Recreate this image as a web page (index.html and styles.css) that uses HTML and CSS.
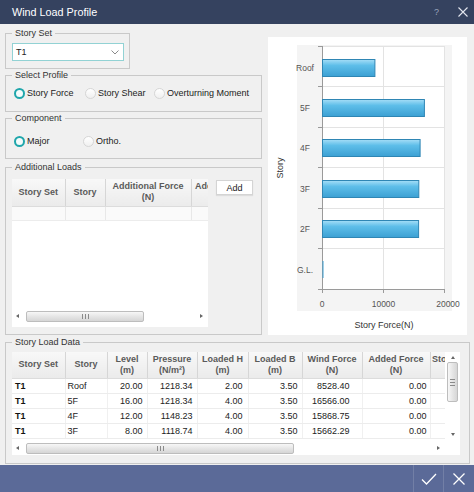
FILE: index.html
```html
<!DOCTYPE html>
<html>
<head>
<meta charset="utf-8">
<link rel="stylesheet" href="styles.css">
</head>
<body>
<div class="window">
  <div class="titlebar">
    <span class="title">Wind Load Profile</span>
    <span class="help">?</span>
    <svg class="tclose" width="10" height="10" viewBox="0 0 10 10"><path d="M0.5 0.5L9.5 9.5M9.5 0.5L0.5 9.5" stroke="#e4e7ef" stroke-width="1.1"/></svg>
  </div>
  <div class="content">
    <div class="top">
      <div class="leftcol">
        <fieldset class="grp g-storyset">
          <legend>Story Set</legend>
          <div class="combo"><span>T1</span><svg width="8" height="5" viewBox="0 0 8 5"><path d="M0.5 0.5L4 4L7.5 0.5" stroke="#8a8a8a" fill="none"/></svg></div>
        </fieldset>
        <fieldset class="grp g-profile">
          <legend>Select Profile</legend>
          <div class="radios">
            <label class="radio w71"><span class="dot on"></span>Story Force</label>
            <label class="radio w69"><span class="dot"></span>Story Shear</label>
            <label class="radio"><span class="dot"></span>Overturning Moment</label>
          </div>
        </fieldset>
        <fieldset class="grp g-component">
          <legend>Component</legend>
          <div class="radios">
            <label class="radio w69"><span class="dot on"></span>Major</label>
            <label class="radio"><span class="dot"></span>Ortho.</label>
          </div>
        </fieldset>
        <fieldset class="grp g-addl">
          <legend>Additional Loads</legend>
          <div class="addl-row">
            <div class="addl-grid">
              <div class="viewport">
                <table class="gt at">
                  <thead>
                    <tr><th class="c-set">Story Set</th><th class="c-story2">Story</th><th class="c-af">Additional Force<br>(N)</th><th class="c-clip">Additional Moment<br>(N-m)</th></tr>
                  </thead>
                  <tbody>
                    <tr class="empty"><td></td><td></td><td></td><td></td></tr>
                  </tbody>
                </table>
              </div>
              <div class="hscroll">
                <span class="arr-l"></span>
                <div class="track"><div class="thumb t-addl"><span class="grip"></span></div></div>
                <span class="arr-r"></span>
              </div>
            </div>
            <button class="btn-add">Add</button>
          </div>
        </fieldset>
      </div>
      <div class="chart">
        <svg width="199" height="298" viewBox="0 0 199 298">
          <defs>
            <linearGradient id="barg" x1="0" y1="0" x2="0" y2="1">
              <stop offset="0" stop-color="#a6def7"/>
              <stop offset="0.35" stop-color="#5ebee9"/>
              <stop offset="1" stop-color="#3ca0d3"/>
            </linearGradient>
          </defs>
          <rect x="29" y="8" width="155" height="266" fill="#f4f4f4"/>
          <rect x="54" y="9" width="123" height="243" fill="#ffffff"/>
          <g stroke="#e3e3e3" stroke-width="1">
            <path d="M54 9.5H177M54 49.5H177M54 90.5H177M54 130.5H177M54 171.5H177M54 211.5H177"/>
            <path d="M115.5 9V252M176.5 9V252"/>
          </g>
          <g stroke="#9a9a9a" stroke-width="1" fill="none">
            <path d="M54.5 9V252.5H177"/>
            <path d="M50 9.5H54M50 49.5H54M50 90.5H54M50 130.5H54M50 171.5H54M50 211.5H54M50 252.5H54"/>
            <path d="M54.5 252V256M115.5 252V256M176.5 252V256"/>
          </g>
          <g fill="url(#barg)" stroke="#2f86b4" stroke-width="1">
            <rect x="54.5" y="22.5" width="52.4" height="17"/>
            <rect x="54.5" y="62.5" width="101.9" height="17"/>
            <rect x="54.5" y="102.5" width="97.6" height="17"/>
            <rect x="54.5" y="143.5" width="96.3" height="17"/>
            <rect x="54.5" y="183.5" width="96.1" height="17"/>
          </g>
          <path d="M55 224V241" stroke="#3ca0d3" stroke-width="1"/>
          <g class="ctext" fill="#555" font-size="8.5" text-anchor="middle">
            <text x="37" y="34">Roof</text>
            <text x="37" y="74">5F</text>
            <text x="37" y="114">4F</text>
            <text x="37" y="155">3F</text>
            <text x="37" y="195">2F</text>
            <text x="37" y="236">G.L.</text>
            <text x="54" y="270">0</text>
            <text x="115.5" y="270">10000</text>
            <text x="180" y="270">20000</text>
          </g>
          <g class="ctext" fill="#333" font-size="9" text-anchor="middle">
            <text x="116" y="291">Story Force(N)</text>
            <text x="0" y="0" transform="translate(15 131) rotate(-90)">Story</text>
          </g>
        </svg>
      </div>
    </div>
    <fieldset class="grp g-data">
      <legend>Story Load Data</legend>
      <div class="data-grid">
        <div class="viewport">
          <table class="gt dt">
            <thead>
              <tr>
                <th class="d-set">Story Set</th><th class="d-story">Story</th><th class="d-level">Level<br>(m)</th><th class="d-pres">Pressure<br>(N/m²)</th><th class="d-lh">Loaded H<br>(m)</th><th class="d-lb">Loaded B<br>(m)</th><th class="d-wf">Wind Force<br>(N)</th><th class="d-af">Added Force<br>(N)</th><th class="d-sf">Story Force<br>(N)</th>
              </tr>
            </thead>
            <tbody>
              <tr><td class="set">T1</td><td class="story">Roof</td><td class="num">20.00</td><td class="num">1218.34</td><td class="num p5">2.00</td><td class="num">3.50</td><td class="num p12">8528.40</td><td class="num p3">0.00</td><td></td></tr>
              <tr><td class="set">T1</td><td class="story">5F</td><td class="num">16.00</td><td class="num">1218.34</td><td class="num p5">4.00</td><td class="num">3.50</td><td class="num p12">16566.00</td><td class="num p3">0.00</td><td></td></tr>
              <tr><td class="set">T1</td><td class="story">4F</td><td class="num">12.00</td><td class="num">1148.23</td><td class="num p5">4.00</td><td class="num">3.50</td><td class="num p12">15868.75</td><td class="num p3">0.00</td><td></td></tr>
              <tr><td class="set">T1</td><td class="story">3F</td><td class="num">8.00</td><td class="num">1118.74</td><td class="num p5">4.00</td><td class="num">3.50</td><td class="num p12">15662.29</td><td class="num p3">0.00</td><td></td></tr>
            </tbody>
          </table>
        </div>
        <div class="vscroll">
          <span class="arr-u"></span>
          <div class="vtrack"><div class="vthumb"><span class="vgrip"></span></div></div>
          <span class="arr-d"></span>
        </div>
        <div class="hscroll">
          <span class="arr-l"></span>
          <div class="track"><div class="thumb t-data"><span class="grip"></span></div></div>
          <span class="arr-r"></span>
        </div>
        <div class="corner"></div>
      </div>
    </fieldset>
  </div>
  <div class="footer">
    <button class="fbtn"><svg width="16" height="12" viewBox="0 0 16 12"><path d="M1 6.5L5.5 11L15 1" stroke="#ffffff" stroke-width="1.3" fill="none"/></svg></button>
    <button class="fbtn"><svg width="12" height="12" viewBox="0 0 12 12"><path d="M0.5 0.5L11.5 11.5M11.5 0.5L0.5 11.5" stroke="#ffffff" stroke-width="1.3"/></svg></button>
  </div>
</div>
</body>
</html>
```

FILE: styles.css
```css
* { box-sizing: border-box; }
html, body { margin: 0; padding: 0; }
body {
  font-family: "Liberation Sans", Arial, sans-serif;
  font-size: 9px;
  color: #222;
  background: #f0f0f0;
}
.window {
  width: 474px;
  height: 492px;
  display: flex;
  flex-direction: column;
  overflow: hidden;
}
.titlebar {
  height: 24px;
  flex: 0 0 24px;
  background: #35425f;
  display: flex;
  align-items: center;
  padding: 0 6px 0 12px;
  color: #fff;
}
.title { flex: 1; font-size: 10.8px; }
.help { color: #9aa4bb; font-size: 9px; margin-right: 19px; }
.tclose { display: block; }

.content {
  flex: 1;
  padding: 3px 4px 0 5px;
  display: flex;
  flex-direction: column;
}
.top { display: flex; gap: 6px; margin-right: 3px; }
.leftcol { width: 257px; display: flex; flex-direction: column; }

fieldset.grp {
  margin: 0;
  border: 1px solid #c9c9c9;
  padding: 0 6px;
  min-width: 0;
}
fieldset.grp legend {
  font-size: 9px;
  line-height: 12px;
  padding: 0 3px;
  color: #333;
}
fieldset.g-storyset { width: 125px; height: 42px; padding-top: 4px; }
fieldset.g-profile { height: 43px; padding-top: 6px; }
fieldset.g-component { height: 47px; padding-top: 11px; }
fieldset.g-addl { height: 174px; margin-top: 2px; padding-top: 6px; }
fieldset.g-data { height: 128px; margin-top: 1px; padding-top: 4px; }

.combo {
  width: 112px;
  height: 18px;
  border: 1px solid #92d2d4;
  background: #fff;
  display: flex;
  align-items: center;
  justify-content: space-between;
  padding: 0 4px 0 3px;
  color: #222;
}

.radios { display: flex; align-items: center; height: 12px; padding-left: 2px; }
.radio { display: flex; align-items: center; gap: 2px; color: #222; white-space: nowrap; }
.w71 { width: 71px; }
.w69 { width: 69px; }
.dot {
  width: 11px;
  height: 11px;
  border-radius: 50%;
  border: 1px solid #d6d6d6;
  background: linear-gradient(#ffffff, #f0f0f0);
}
.dot.on {
  border: 2.5px solid #1fa6ab;
  background: #f4fbfb;
}

.addl-row { display: flex; gap: 8px; align-items: flex-start; }
.addl-grid {
  width: 196px;
  height: 148px;
  flex: 0 0 196px;
  background: #fff;
  display: flex;
  flex-direction: column;
  padding-bottom: 4px;
}
.addl-grid .viewport { flex: 1; overflow: hidden; }
.btn-add {
  margin-top: 1px;
  width: 37px;
  height: 15px;
  padding: 0;
  border: 1px solid #d4d4d4;
  background: #fff;
  font-family: inherit;
  font-size: 9px;
  color: #222;
  box-shadow: 0 1px 1px rgba(0,0,0,0.08);
}

.gt {
  border-collapse: collapse;
  table-layout: fixed;
}
.at { width: 268px; }
.gt th {
  height: 27px;
  padding: 0;
  font-weight: bold;
  color: #5a5a5a;
  line-height: 11px;
  text-align: center;
  background: linear-gradient(#f8f8f8, #ebebeb);
  border-right: 1px solid #d6d6d6;
  border-bottom: 1px solid #dcdcdc;
  white-space: nowrap;
  overflow: hidden;
}
.gt td {
  height: 15px;
  padding: 0;
  border-right: 1px solid #f0f0f0;
  border-bottom: 1px solid #ececec;
  white-space: nowrap;
  overflow: hidden;
}
.gt tr.empty td { height: 14px; background: #fafafa; border-right-color: #e8e8e8; }
.c-set { width: 53px; }
.c-story2 { width: 40px; }
.c-af { width: 86px; }
.c-clip { width: 89px; }

.data-grid {
  width: 448px;
  height: 103px;
  background: #fff;
  display: grid;
  grid-template-columns: 433px 15px;
  grid-template-rows: 89px 14px;
}
.data-grid .viewport { overflow: hidden; }
.dt { width: 472px; }
.dt th { height: 26px; }
.d-set { width: 53px; }
.d-story { width: 42px; }
.d-level { width: 40px; }
.d-pres { width: 50px; }
.d-lh { width: 51px; }
.d-lb { width: 54px; }
.d-wf { width: 60px; }
.d-af { width: 68px; }
.d-sf { width: 54px; }
.dt td.set { font-weight: bold; padding-left: 3px; color: #111; }
.dt td.story { padding-left: 2px; }
.dt td.num { text-align: right; padding-right: 4px; }
.dt td.num.p5 { padding-right: 5px; }
.dt td.num.p12 { padding-right: 12px; }
.dt td.num.p3 { padding-right: 3px; }

.hscroll {
  height: 14px;
  display: flex;
  align-items: center;
  padding: 0 5px 0 4px;
  gap: 4px;
}
.track { flex: 1; height: 11px; display: flex; align-items: center; }
.thumb {
  height: 11px;
  border: 1px solid #bdbdbd;
  border-radius: 2px;
  background: linear-gradient(#f7f7f7, #e4e4e4 55%, #d6d6d6);
  display: flex;
  align-items: center;
  justify-content: center;
}
.t-addl { width: 118px; }
.t-data { width: 268px; }
.grip {
  width: 7px;
  height: 5px;
  background: repeating-linear-gradient(90deg, #8a8a8a 0 1px, transparent 1px 3px);
}
.arr-l, .arr-r {
  width: 0; height: 0;
  border-top: 2.5px solid transparent;
  border-bottom: 2.5px solid transparent;
  flex: 0 0 auto;
}
.arr-l { border-right: 3px solid #666; margin-right: 3px; }
.arr-r { border-left: 3px solid #666; }

.vscroll {
  display: flex;
  flex-direction: column;
  align-items: center;
  padding: 4px 0 5px;
  gap: 3px;
  background: #fff;
}
.vtrack { flex: 1; width: 11px; }
.vthumb {
  width: 11px;
  height: 40px;
  border: 1px solid #bdbdbd;
  border-radius: 2px;
  background: linear-gradient(90deg, #f7f7f7, #e4e4e4 55%, #d6d6d6);
  display: flex;
  align-items: center;
  justify-content: center;
}
.vgrip {
  width: 5px;
  height: 7px;
  background: repeating-linear-gradient(180deg, #8a8a8a 0 1px, transparent 1px 3px);
}
.arr-u, .arr-d {
  width: 0; height: 0;
  border-left: 2.5px solid transparent;
  border-right: 2.5px solid transparent;
}
.arr-u { border-bottom: 3px solid #666; }
.arr-d { border-top: 3px solid #666; }
.corner { background: #fff; }

.chart {
  width: 199px;
  height: 298px;
  margin-top: 10px;
  background: #fff;
}
.chart svg { display: block; }
.ctext { font-family: "Liberation Sans", Arial, sans-serif; }

.footer {
  height: 27px;
  flex: 0 0 27px;
  background: #5b6a98;
  display: flex;
  justify-content: flex-end;
  padding-right: 1px;
}
.fbtn {
  width: 30px;
  height: 27px;
  padding: 0;
  border: 0;
  border-left: 1px solid rgba(255,255,255,0.14);
  background: transparent;
  display: flex;
  align-items: center;
  justify-content: center;
}
```
